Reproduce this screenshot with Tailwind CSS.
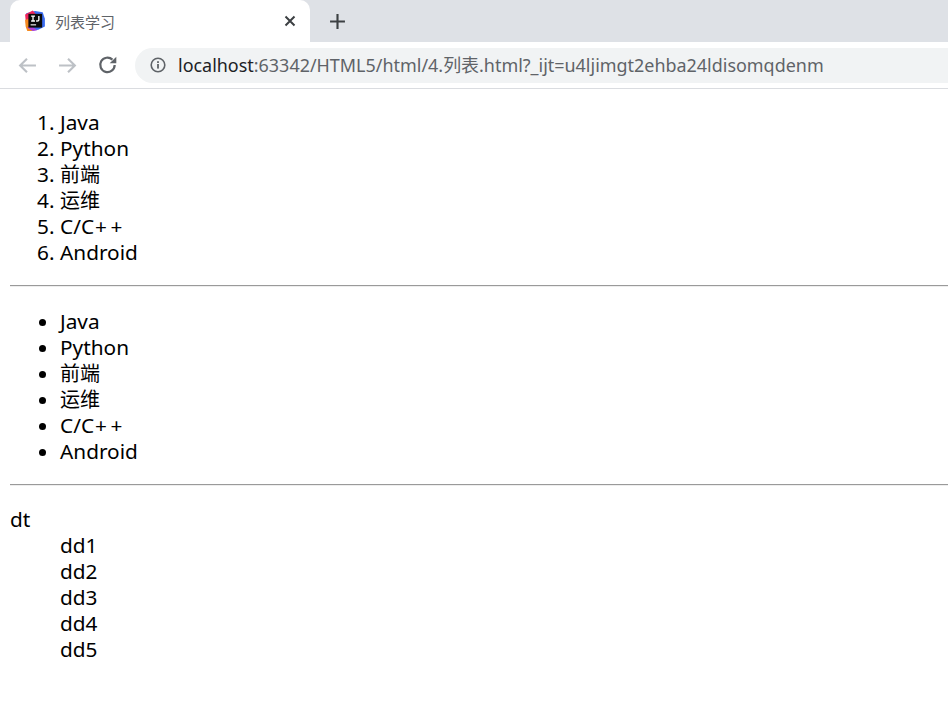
<!DOCTYPE html>
<html lang="zh-CN">
<head>
  <meta charset="UTF-8" />
  <title>列表学习</title>
  <script src="https://cdn.jsdelivr.net/npm/@tailwindcss/browser@4"></script>
</head>
<body class="bg-white h-[712px] overflow-hidden font-['Noto_Sans','Noto_Sans_CJK_SC',sans-serif] text-black">

  <!-- Tab strip -->
  <div class="h-[42px] bg-[#dee1e6] flex items-end">
    <div class="w-[10px] h-[10px] self-end bg-[#dee1e6]"></div>
    <div class="w-[300px] h-[42px] bg-white rounded-t-[10px] flex items-center pl-[14px] pr-[14px]">
      <svg class="w-[22px] h-[22px] mr-[9px]" viewBox="0 0 20 20">
        <path d="M2 3 L10 1 L17 2 L19 8 L19 15 L13 18 L6 19 L2 16 Z" fill="#3b6cf0" />
        <path d="M1 4 L8 0.5 L11 4 L5 16 L2 15 Z" fill="#f0245c" />
        <path d="M1 9 L4 8 L5 17 L8 19 L3 19 L1.5 15 Z" fill="#f58a1f" />
        <path d="M3 16 L8 19 L12 18.5 L6 14 Z" fill="#b63fd8" />
        <rect x="4" y="3.5" width="12.5" height="12.5" fill="#0a0a0a" />
        <rect x="6" y="13" width="5" height="1" fill="#fff" />
        <path d="M6.5 5.5 H10 M8.2 5.5 V10 M6.5 10 H10 M13.5 5.5 V9 Q13.5 10 12 10 H11" fill="none" stroke="#fff" stroke-width="1.2" />
      </svg>
      <span class="text-[15px] text-[#5f6368] leading-none mt-[2px]">列表学习</span>
      <svg class="w-[12px] h-[12px] ml-auto" viewBox="0 0 12 12">
        <path d="M1.5 1.5 L10.5 10.5 M10.5 1.5 L1.5 10.5" stroke="#3c4043" stroke-width="2" fill="none" />
      </svg>
    </div>
    <div class="h-[42px] flex items-center ml-[19px]">
      <svg class="w-[17px] h-[17px]" viewBox="0 0 16 16">
        <path d="M8 1 V15 M1 8 H15" stroke="#3c4043" stroke-width="2" fill="none" />
      </svg>
    </div>
  </div>

  <!-- Address bar -->
  <div class="h-[47px] bg-white border-b border-[#dadce0] flex items-center pl-[18px]">
    <svg class="w-[19px] h-[19px]" viewBox="0 0 18 18">
      <path d="M17 9 H2 M8.5 2.5 L2 9 L8.5 15.5" stroke="#bdc1c6" stroke-width="2" fill="none" />
    </svg>
    <svg class="w-[19px] h-[19px] ml-[21px]" viewBox="0 0 18 18">
      <path d="M1 9 H16 M9.5 2.5 L16 9 L9.5 15.5" stroke="#bdc1c6" stroke-width="2" fill="none" />
    </svg>
    <svg class="w-[20px] h-[20px] ml-[21px]" viewBox="0 0 18 18">
      <path d="M15 9 A6.5 6.5 0 1 1 13 4.2" stroke="#5f6368" stroke-width="2" fill="none" />
      <path d="M16.5 1.5 V7.5 H10.5 Z" fill="#5f6368" />
    </svg>
    <div class="ml-[17px] w-[813px] h-[35px] rounded-l-full bg-[#f1f3f4] flex items-center pl-[15px]">
      <svg class="w-[16px] h-[16px] mr-[12px]" viewBox="0 0 16 16">
        <circle cx="8" cy="8" r="6.8" stroke="#5f6368" stroke-width="1.6" fill="none" />
        <rect x="7.1" y="7" width="1.8" height="4.6" fill="#5f6368" />
        <rect x="7.1" y="4.2" width="1.8" height="1.8" fill="#5f6368" />
      </svg>
      <span class="text-[17.95px] leading-none whitespace-nowrap text-[#5f6368] mt-[1px]"><span class="text-[#202124]">localhost</span>:63342/HTML5/html/4.列表.html?_ijt=u4ljimgt2ehba24ldisomqdenm</span>
    </div>
  </div>

  <!-- Page content -->
  <main class="px-[10px] pt-[20px] text-[20.8px] leading-[26px]">
    <ol class="list-decimal pl-[50px]">
      <li class="h-[26px]">Java</li>
      <li class="h-[26px]">Python</li>
      <li class="h-[26px]"><span class="text-[20px] leading-none">前端</span></li>
      <li class="h-[26px]"><span class="text-[20px] leading-none">运维</span></li>
      <li class="h-[26px]">C/C<span class="leading-none tracking-[3.5px] ml-[1px]">++</span></li>
      <li class="h-[26px]">Android</li>
    </ol>
    <hr class="mt-[20px] -mr-[10px] mb-[21px] border-t border-b border-t-[#9a9a9a] border-b-[#eeeeee]" />
    <ul class="list-disc pl-[50px]">
      <li class="h-[26px]">Java</li>
      <li class="h-[26px]">Python</li>
      <li class="h-[26px]"><span class="text-[20px] leading-none">前端</span></li>
      <li class="h-[26px]"><span class="text-[20px] leading-none">运维</span></li>
      <li class="h-[26px]">C/C<span class="leading-none tracking-[3.5px] ml-[1px]">++</span></li>
      <li class="h-[26px]">Android</li>
    </ul>
    <hr class="mt-[20px] -mr-[10px] mb-[20px] border-t border-b border-t-[#9a9a9a] border-b-[#eeeeee]" />
    <dl>
      <dt>dt</dt>
      <dd class="ml-[50px]">dd1</dd>
      <dd class="ml-[50px]">dd2</dd>
      <dd class="ml-[50px]">dd3</dd>
      <dd class="ml-[50px]">dd4</dd>
      <dd class="ml-[50px]">dd5</dd>
    </dl>
  </main>

</body>
</html>
